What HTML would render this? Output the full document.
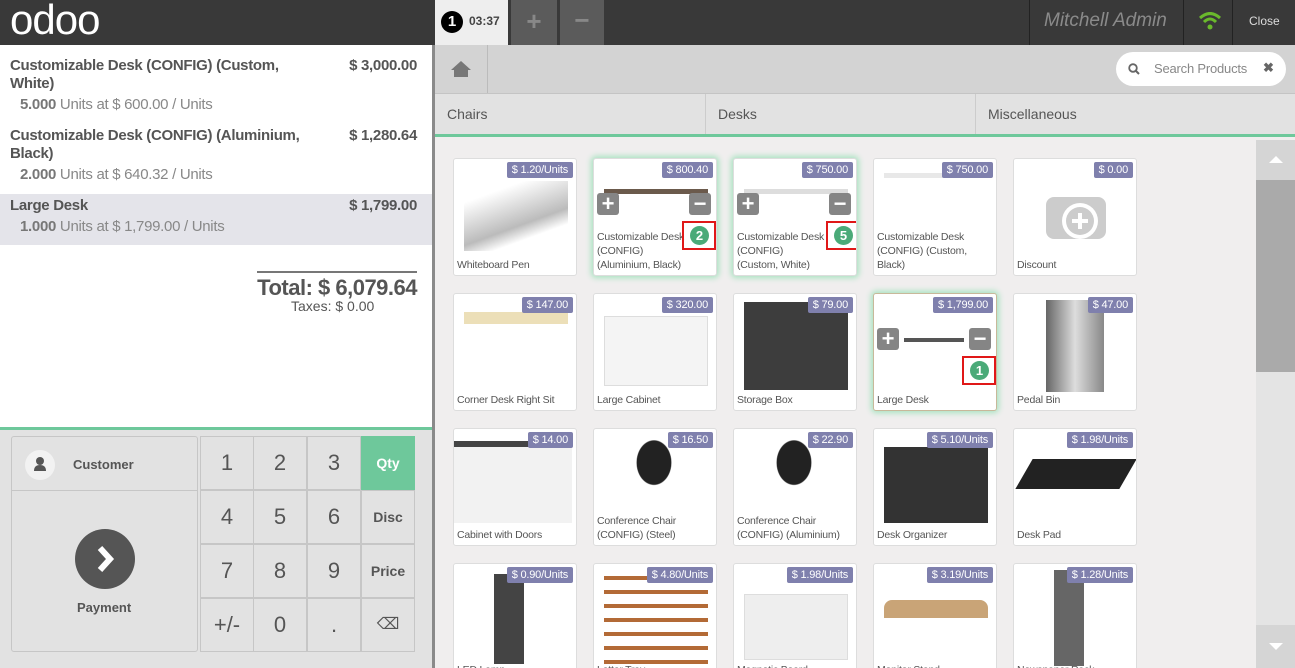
<!DOCTYPE html>
<html><head><meta charset="utf-8"><style>
*{box-sizing:border-box;margin:0;padding:0}
html,body{width:1295px;height:668px;overflow:hidden}
body{font-family:"Liberation Sans",sans-serif;background:#f0eeee;position:relative;color:#555}
.hdr{position:absolute;left:0;top:0;width:1295px;height:45px;background:#393939}
.logo{position:absolute;left:10px;top:0;font-size:42px;color:#fff;font-weight:normal;letter-spacing:-1px;line-height:40px}
.tab{position:absolute;top:0;height:45px}
.left{position:absolute;left:0;top:45px;width:432px;height:623px;background:#fff}
.sep{position:absolute;left:432px;top:45px;width:3px;height:623px;background:#8a8a8a}
.line{position:absolute;left:0;width:432px;padding:0 15px 0 10px;font-size:15px;letter-spacing:-0.3px}
.line .n{font-weight:bold;width:320px;line-height:18px;white-space:nowrap}
.line .p{position:absolute;right:15px;top:0;font-weight:bold}
.line .u{color:#888;padding-left:10px;margin-top:3px}
.line .u b{color:#777}
.pad{position:absolute;left:0;top:427px;width:432px;height:241px;background:#e2e2e2;border-top:3px solid #6ec89b}
.k{position:absolute;width:54px;height:54px;border:1px solid #c6c6c6;text-align:center;line-height:52px;font-size:22px;color:#555;background:#e2e2e2}
.k.s{font-size:14px;font-weight:bold}
.top{position:absolute;left:435px;top:45px;width:860px;height:49px;background:#d3d3d3;border-bottom:1px solid #c4c4c4}
.cats{position:absolute;left:435px;top:94px;width:860px;height:43px;background:#e2e2e2;border-bottom:3px solid #6ec89b}
.cat{position:absolute;top:0;height:40px;line-height:40px;padding-left:12px;font-size:14px;border-right:1px solid #ccc}
.card{position:absolute;width:124px;height:118px;background:#fff;border:1px solid #ddd;border-radius:3px;overflow:hidden}
.card.g{box-shadow:0 0 6px 2px #a8e3c1}
.pr{position:absolute;right:3px;top:3px;background:#7f80ad;color:#fff;font-size:11px;padding:1px 5px;border-radius:2px;line-height:14px;letter-spacing:-0.2px}
.nm{position:absolute;left:3px;bottom:3px;font-size:10.5px;color:#555;line-height:14px;width:118px;letter-spacing:-0.2px}
.img{position:absolute;left:10px;top:22px;width:104px;height:70px}
.pm{position:absolute;width:22px;height:22px;background:#858585;border-radius:3px;color:#fff;font-size:22px;font-weight:bold;text-align:center;line-height:21px}
.badge{position:absolute;width:34px;height:29px;border:2px solid #e01818}
.badge span{position:absolute;left:6px;top:3px;width:19px;height:19px;background:#4aaa78;border-radius:50%;color:#fff;font-size:13px;text-align:center;line-height:19px;font-weight:bold}
</style></head><body>
<div class="hdr">
<div class="logo">odoo</div>
<div class="tab" style="left:435px;width:73px;background:#eee;top:0">
<div style="position:absolute;left:6px;top:11px;width:22px;height:22px;background:#000;border-radius:50%;color:#fff;font-weight:bold;font-size:15px;text-align:center;line-height:22px">1</div>
<div style="position:absolute;left:34px;top:14px;font-size:12px;font-weight:bold;color:#444">03:37</div></div>
<div class="tab" style="left:511px;width:46px;background:#5b5b5b;color:#888;font-size:26px;font-weight:bold;text-align:center;line-height:43px">+</div>
<div class="tab" style="left:560px;width:44px;background:#5b5b5b;color:#888;font-size:26px;font-weight:bold;text-align:center;line-height:41px">−</div>
<div style="position:absolute;left:1029px;top:0;width:1px;height:45px;background:#222"></div>
<div style="position:absolute;left:1044px;top:10px;font-size:19px;font-style:italic;color:#8a8a8a">Mitchell Admin</div>
<div style="position:absolute;left:1183px;top:0;width:1px;height:45px;background:#222"></div>
<svg style="position:absolute;left:1199px;top:12px" width="22" height="18" viewBox="0 0 22 18"><path d="M1 6 Q11 -3 21 6" stroke="#6ab92c" stroke-width="3" fill="none"/><path d="M5 10 Q11 4 17 10" stroke="#6ab92c" stroke-width="3" fill="none"/><circle cx="11" cy="15" r="2.5" fill="#6ab92c"/></svg>
<div style="position:absolute;left:1232px;top:0;width:1px;height:45px;background:#222"></div>
<div style="position:absolute;left:1249px;top:14px;font-size:12px;color:#ddd">Close</div>
</div>

<div class="left">
<div class="line" style="top:12px"><div class="n">Customizable Desk (CONFIG) (Custom,<br>White)</div><div class="p">$ 3,000.00</div><div class="u"><b>5.000</b> Units at $ 600.00 / Units</div></div>
<div class="line" style="top:82px"><div class="n">Customizable Desk (CONFIG) (Aluminium,<br>Black)</div><div class="p">$ 1,280.64</div><div class="u"><b>2.000</b> Units at $ 640.32 / Units</div></div>
<div class="line" style="top:149px;height:51px;background:#e4e4ea;padding-top:3px"><div class="n">Large Desk</div><div class="p" style="top:3px">$ 1,799.00</div><div class="u"><b>1.000</b> Units at $ 1,799.00 / Units</div></div>
<div style="position:absolute;right:15px;top:226px;font-size:22px;font-weight:bold;border-top:2px solid #777;padding-top:2px;color:#555;letter-spacing:-0.5px">Total: $ 6,079.64</div>
<div style="position:absolute;left:291px;top:253px;font-size:14px">Taxes: $ 0.00</div>
</div>
<div class="sep"></div>

<div class="pad">
<div style="position:absolute;left:11px;top:6px;width:187px;height:216px;border:1px solid #c6c6c6;border-radius:3px"></div>
<div style="position:absolute;left:11px;top:60px;width:187px;height:1px;background:#c6c6c6"></div>
<div style="position:absolute;left:25px;top:20px;width:30px;height:30px;border-radius:50%;background:#f2f2f2"><svg width="30" height="30"><circle cx="15" cy="11" r="4" fill="#555"/><path d="M9 21 Q9 15 15 15 Q21 15 21 21Z" fill="#555"/></svg></div>
<div style="position:absolute;left:73px;top:27px;font-size:13px;font-weight:bold">Customer</div>
<div style="position:absolute;left:75px;top:99px;width:60px;height:60px;border-radius:50%;background:#555"><svg width="60" height="60"><path d="M25 19 L35 30 L25 41" stroke="#fff" stroke-width="6" fill="none"/></svg></div>
<div style="position:absolute;left:77px;top:170px;font-size:13px;font-weight:bold">Payment</div>
<div class="k" style="left:200px;top:6px">1</div><div class="k" style="left:253px;top:6px">2</div><div class="k" style="left:307px;top:6px">3</div><div class="k s" style="left:361px;top:6px;background:#6ec89b;color:#fff;border-color:#6ec89b">Qty</div>
<div class="k" style="left:200px;top:60px">4</div><div class="k" style="left:253px;top:60px">5</div><div class="k" style="left:307px;top:60px">6</div><div class="k s" style="left:361px;top:60px">Disc</div>
<div class="k" style="left:200px;top:114px">7</div><div class="k" style="left:253px;top:114px">8</div><div class="k" style="left:307px;top:114px">9</div><div class="k s" style="left:361px;top:114px">Price</div>
<div class="k" style="left:200px;top:168px">+/-</div><div class="k" style="left:253px;top:168px">0</div><div class="k" style="left:307px;top:168px">.</div><div class="k" style="left:361px;top:168px;font-size:16px">⌫</div>
</div>

<div class="top">
<div style="position:absolute;left:0;top:0;width:53px;height:48px;border-right:1px solid #bbb"><svg style="position:absolute;left:15px;top:15px" width="22" height="18"><path d="M11 1 L1 10 L4 10 L4 17 L18 17 L18 10 L21 10Z" fill="#777"/></svg></div>
<div style="position:absolute;left:681px;top:7px;width:170px;height:34px;background:#fff;border-radius:17px">
<svg style="position:absolute;left:12px;top:11px" width="12" height="12"><circle cx="5" cy="5" r="3.8" stroke="#666" stroke-width="1.8" fill="none"/><path d="M8 8 L11 11" stroke="#666" stroke-width="2"/></svg>
<div style="position:absolute;left:38px;top:9px;font-size:13px;color:#888;letter-spacing:-0.2px">Search Products</div>
<div style="position:absolute;left:147px;top:8px;font-size:13px;color:#666;font-weight:bold">✖</div></div>
</div>
<div class="cats">
<div class="cat" style="left:0;width:271px">Chairs</div>
<div class="cat" style="left:271px;width:270px">Desks</div>
<div class="cat" style="left:541px;width:319px;border:none">Miscellaneous</div>
</div>

<div style="position:absolute;left:1256px;top:140px;width:39px;height:528px;background:#e4e4e4"></div>
<div style="position:absolute;left:1256px;top:140px;width:39px;height:40px;background:#d5d5d5"><div style="margin:16px auto;width:0;height:0;border-left:7px solid transparent;border-right:7px solid transparent;border-bottom:7px solid #fff"></div></div>
<div style="position:absolute;left:1256px;top:180px;width:39px;height:192px;background:#aaa"></div>
<div style="position:absolute;left:1256px;top:625px;width:39px;height:43px;background:#d5d5d5"><div style="margin:18px auto;width:0;height:0;border-left:7px solid transparent;border-right:7px solid transparent;border-top:7px solid #fff"></div></div>

<div class="card" style="left:453px;top:158px"><div class="img" style="background:linear-gradient(160deg,#fff 20%,#ddd 40%,#bbb 60%,#fff 75%)"></div><div class="pr">$ 1.20/Units</div><div class="nm">Whiteboard Pen</div></div>
<div class="card g" style="left:593px;top:158px"><div class="img" style="top:30px;height:36px;border-top:5px solid #6b5a4c"></div><div class="pr">$ 800.40</div><div class="nm">Customizable Desk<br>(CONFIG)<br>(Aluminium, Black)</div><div class="pm" style="left:3px;top:34px">+</div><div class="pm" style="left:95px;top:34px">−</div><div class="badge" style="left:88px;top:62px"><span>2</span></div></div>
<div class="card g" style="left:733px;top:158px"><div class="img" style="top:30px;height:36px;border-top:5px solid #ddd"></div><div class="pr">$ 750.00</div><div class="nm">Customizable Desk<br>(CONFIG)<br>(Custom, White)</div><div class="pm" style="left:3px;top:34px">+</div><div class="pm" style="left:95px;top:34px">−</div><div class="badge" style="left:92px;top:62px"><span>5</span></div></div>
<div class="card" style="left:873px;top:158px"><div class="img" style="top:14px;height:50px;border-top:5px solid #e8e8e8"></div><div class="pr">$ 750.00</div><div class="nm">Customizable Desk<br>(CONFIG) (Custom,<br>Black)</div></div>
<div class="card" style="left:1013px;top:158px"><svg class="img" viewBox="0 0 104 70"><rect x="22" y="16" width="60" height="42" rx="8" fill="#ccc"/><circle cx="56" cy="40" r="18" fill="#fff"/><circle cx="56" cy="40" r="14" fill="#ccc"/><path d="M56 32v16M48 40h16" stroke="#fff" stroke-width="4"/></svg><div class="pr">$ 0.00</div><div class="nm">Discount</div></div>
<div class="card" style="left:453px;top:293px"><div class="img" style="top:18px;height:12px;background:#ecdfb8"></div><div class="pr">$ 147.00</div><div class="nm">Corner Desk Right Sit</div></div>
<div class="card" style="left:593px;top:293px"><div class="img" style="background:#f4f4f4;border:1px solid #ddd"></div><div class="pr">$ 320.00</div><div class="nm">Large Cabinet</div></div>
<div class="card" style="left:733px;top:293px"><div class="img" style="top:8px;height:88px;background:#3d3d3d"></div><div class="pr">$ 79.00</div><div class="nm">Storage Box</div></div>
<div class="card g" style="left:873px;top:293px;border-color:#c8b89a"><div class="img" style="top:44px;left:30px;width:60px;height:12px;border-top:4px solid #555"></div><div class="pr">$ 1,799.00</div><div class="nm">Large Desk</div><div class="pm" style="left:3px;top:34px">+</div><div class="pm" style="left:95px;top:34px">−</div><div class="badge" style="left:88px;top:62px"><span>1</span></div></div>
<div class="card" style="left:1013px;top:293px"><div class="img" style="left:32px;width:58px;top:6px;height:92px;background:linear-gradient(90deg,#666,#ddd,#888)"></div><div class="pr">$ 47.00</div><div class="nm">Pedal Bin</div></div>
<div class="card" style="left:453px;top:428px"><div class="img" style="left:0;width:118px;top:12px;height:82px;background:#f2f2f2;border-top:6px solid #444"></div><div class="pr">$ 14.00</div><div class="nm">Cabinet with Doors</div></div>
<div class="card" style="left:593px;top:428px"><div class="img" style="left:30px;width:60px;top:8px;height:64px;background:radial-gradient(ellipse at 50% 40%,#222 40%,transparent 42%)"></div><div class="pr">$ 16.50</div><div class="nm">Conference Chair<br>(CONFIG) (Steel)</div></div>
<div class="card" style="left:733px;top:428px"><div class="img" style="left:30px;width:60px;top:8px;height:64px;background:radial-gradient(ellipse at 50% 40%,#222 40%,transparent 42%)"></div><div class="pr">$ 22.90</div><div class="nm">Conference Chair<br>(CONFIG) (Aluminium)</div></div>
<div class="card" style="left:873px;top:428px"><div class="img" style="top:18px;height:76px;background:#333"></div><div class="pr">$ 5.10/Units</div><div class="nm">Desk Organizer</div></div>
<div class="card" style="left:1013px;top:428px"><div class="img" style="top:30px;height:30px;background:#222;transform:skewX(-30deg)"></div><div class="pr">$ 1.98/Units</div><div class="nm">Desk Pad</div></div>
<div class="card" style="left:453px;top:563px"><div class="img" style="left:40px;width:30px;top:10px;height:90px;background:#444"></div><div class="pr">$ 0.90/Units</div><div class="nm">LED Lamp</div></div>
<div class="card" style="left:593px;top:563px"><div class="img" style="top:12px;height:90px;background:repeating-linear-gradient(#b36a36 0 4px,#fff 4px 14px)"></div><div class="pr">$ 4.80/Units</div><div class="nm">Letter Tray</div></div>
<div class="card" style="left:733px;top:563px"><div class="img" style="top:30px;height:66px;background:#eee;border:1px solid #ddd"></div><div class="pr">$ 1.98/Units</div><div class="nm">Magnetic Board</div></div>
<div class="card" style="left:873px;top:563px"><div class="img" style="top:36px;height:18px;background:#c9a477;border-radius:8px 8px 0 0"></div><div class="pr">$ 3.19/Units</div><div class="nm">Monitor Stand</div></div>
<div class="card" style="left:1013px;top:563px"><div class="img" style="left:40px;width:30px;top:6px;height:96px;background:#666"></div><div class="pr">$ 1.28/Units</div><div class="nm">Newspaper Rack</div></div>
</body></html>
